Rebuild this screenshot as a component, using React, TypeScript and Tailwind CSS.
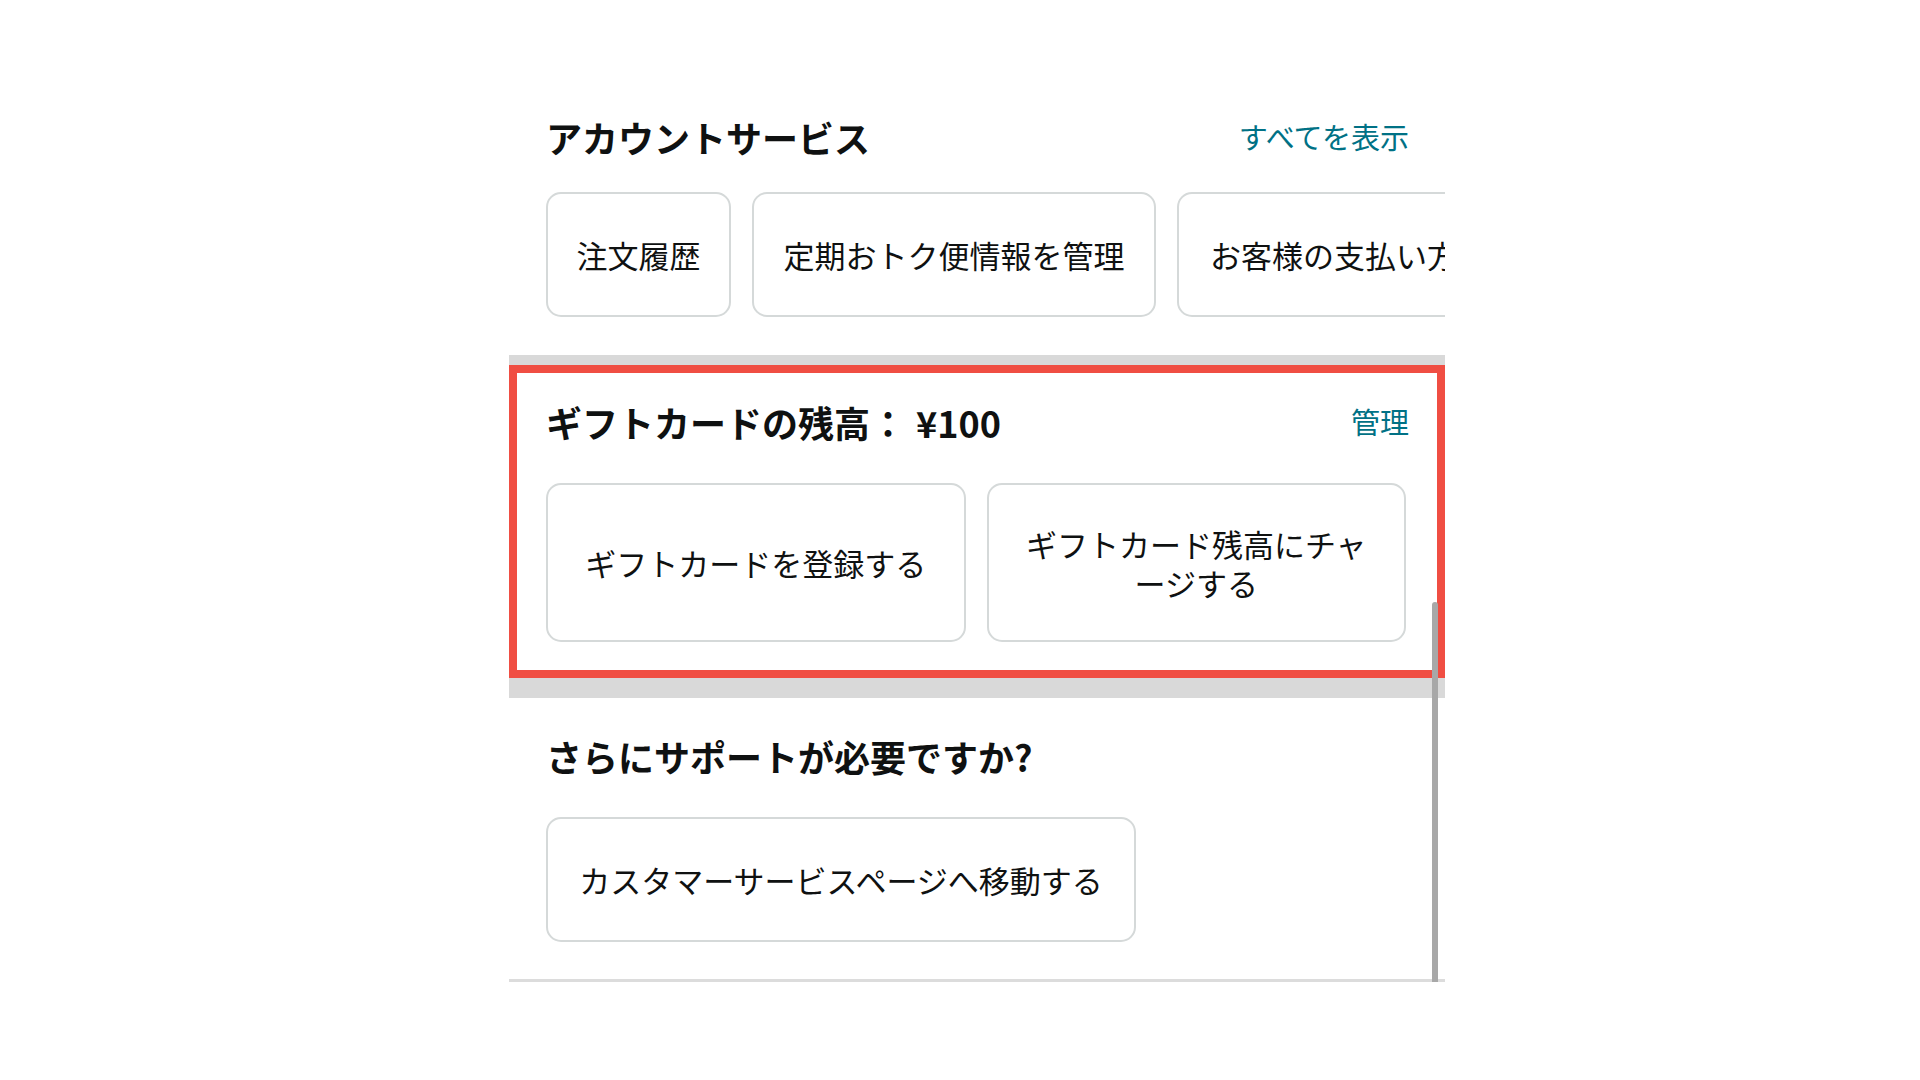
import React from 'react';

const font = { fontFamily: '"Noto Sans CJK JP", "Noto Sans", sans-serif' };

const accountItems = [
  { label: '注文履歴', width: 'w-[185px]' },
  { label: '定期おトク便情報を管理', width: 'w-[404px]' },
  { label: 'お客様の支払い方法', width: 'w-[380px]' },
];

function TileButton({ children, className }: { children: React.ReactNode; className?: string }) {
  return (
    <button
      className={`shrink-0 flex items-center justify-center bg-white border-2 border-[#d5d9d9] rounded-[15px] text-[31px] leading-[39px] text-[#0f1111] font-normal whitespace-nowrap ${className ?? ''}`}
    >
      {children}
    </button>
  );
}

export default function App() {
  return (
    <div className="min-h-screen bg-white" style={font}>
      <div className="relative ml-[509px] w-[936px]">
        {/* Account services */}
        <section className="pt-[115px] pb-[38px] pl-[37px]">
          <div className="flex items-center justify-between h-[44px] pr-[36px]">
            <h2 className="text-[36px] font-bold text-[#0f1111]">アカウントサービス</h2>
            <a className="text-[29px] text-[#007185]">すべてを表示</a>
          </div>
          <div className="mt-[33px] flex gap-[21px] overflow-hidden">
            {accountItems.map((item, i) => (
              <TileButton
                key={item.label}
                className={`h-[125px] ${item.width} ${i === 2 ? 'justify-start pl-[31px]' : ''}`}
              >
                {item.label}
              </TileButton>
            ))}
          </div>
        </section>

        <div className="h-[10px] bg-[#d9d9d9]" />

        {/* Gift card balance */}
        <section className="border-[8px] border-[#f04e43] pt-[27px] pb-[28px] pl-[29px] pr-[31px]">
          <div className="flex items-center justify-between h-[44px]">
            <h2 className="text-[36px] font-bold text-[#0f1111]">
              ギフトカードの残高：<span className="ml-[10px]">¥100</span>
            </h2>
            <a className="text-[29px] text-[#007185] mr-[-3px]">管理</a>
          </div>
          <div className="mt-[39px] grid grid-cols-2 gap-[21px]">
            <TileButton className="h-[159px]">ギフトカードを登録する</TileButton>
            <TileButton className="h-[159px] text-center">
              ギフトカード残高にチャ
              <br />
              ージする
            </TileButton>
          </div>
        </section>

        <div className="h-[20px] bg-[#d9d9d9]" />

        {/* Support */}
        <section className="pt-[36px] pb-[37px] pl-[37px]">
          <div className="flex items-center h-[44px]">
            <h2 className="text-[36px] font-bold text-[#0f1111]">さらにサポートが必要ですか?</h2>
          </div>
          <div className="mt-[39px] flex">
            <TileButton className="h-[125px] w-[590px]">カスタマーサービスページへ移動する</TileButton>
          </div>
        </section>

        <div className="h-[3px] bg-[#dcdcdc]" />

        {/* scrollbar thumb */}
        <div className="absolute left-[923px] top-[602px] w-[6px] h-[380px] rounded-t-full bg-[#a8a8a8]" />
      </div>
    </div>
  );
}
